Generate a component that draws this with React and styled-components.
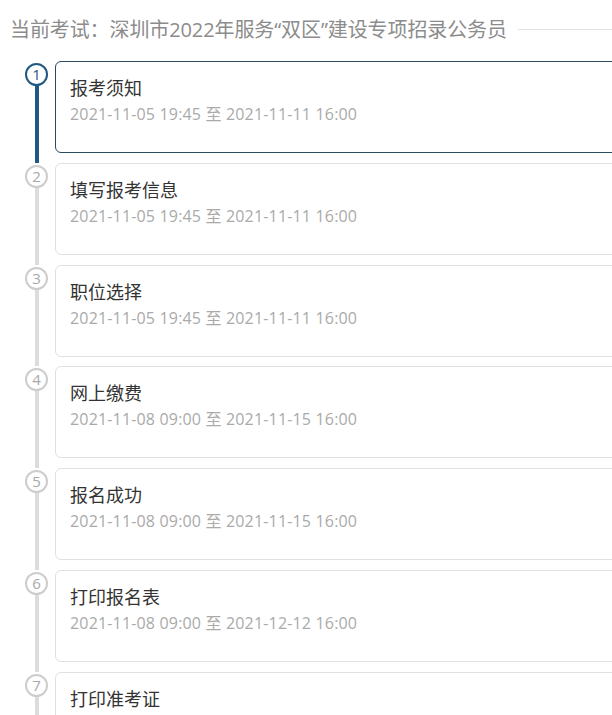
import React from 'react';
import styled, { createGlobalStyle } from 'styled-components';

const GlobalStyle = createGlobalStyle`
  body {
    margin: 0;
    background: #fff;
    overflow: hidden;
    font-family: "Open Sans", "Noto Sans CJK SC", sans-serif;
  }
`;

const steps = [
  { title: '报考须知', time: '2021-11-05 19:45 至 2021-11-11 16:00' },
  { title: '填写报考信息', time: '2021-11-05 19:45 至 2021-11-11 16:00' },
  { title: '职位选择', time: '2021-11-05 19:45 至 2021-11-11 16:00' },
  { title: '网上缴费', time: '2021-11-08 09:00 至 2021-11-15 16:00' },
  { title: '报名成功', time: '2021-11-08 09:00 至 2021-11-15 16:00' },
  { title: '打印报名表', time: '2021-11-08 09:00 至 2021-12-12 16:00' },
  { title: '打印准考证', time: '' },
];

const App = () => {
  const current = 0;
  return (
    <Page>
      <GlobalStyle />
      <Header>
        <HeaderTitle>当前考试：深圳市2022年服务“双区”建设专项招录公务员</HeaderTitle>
        <HeaderLine />
      </Header>
      <StepList>
        {steps.map((step, i) => (
          <Step key={i}>
            <Rail>
              <Circle active={i === current}>{i + 1}</Circle>
              <RailLine active={i === current} />
            </Rail>
            <Card active={i === current}>
              <CardTitle>{step.title}</CardTitle>
              <CardTime>{step.time}</CardTime>
            </Card>
          </Step>
        ))}
      </StepList>
    </Page>
  );
};

export default App;

const Page = styled.div`
  width: 720px;
`;

const Header = styled.div`
  display: flex;
  align-items: center;
  padding: 18px 0 0 10px;
  width: 602px;
`;

const HeaderTitle = styled.div`
  font-size: 20px;
  line-height: 24px;
  color: #8c8c8c;
  white-space: nowrap;
  letter-spacing: -0.1px;
`;

const HeaderLine = styled.div`
  flex: 1;
  height: 1px;
  background: #e2e2e2;
  margin-left: 11px;
  margin-top: -2px;
`;

const StepList = styled.div`
  margin-top: 19px;
`;

const Step = styled.div`
  display: flex;
`;

const Rail = styled.div`
  width: 55px;
  padding: 2px 0 0 25px;
  box-sizing: border-box;
  display: flex;
  flex-direction: column;
  align-items: flex-start;
`;

const Circle = styled.div`
  width: 23px;
  height: 23px;
  box-sizing: border-box;
  border-radius: 50%;
  border: 2px solid ${p => (p.active ? '#1f5883' : '#cdcdcd')};
  color: ${p => (p.active ? '#1f5883' : '#a8a8a8')};
  font-size: 15px;
  line-height: 19px;
  text-align: center;
  background: #fff;
`;

const RailLine = styled.div`
  flex: 1;
  width: 4px;
  margin-left: 9.5px;
  background: ${p => (p.active ? '#1f5883' : '#dcdcdc')};
`;

const Card = styled.div`
  width: 620px;
  height: 92px;
  box-sizing: border-box;
  margin-bottom: 9.8px;
  padding: 14px 14px;
  border: 1px solid ${p => (p.active ? '#2b4a5c' : '#e0e0e0')};
  border-radius: 6px;
  background: #fff;
`;

const CardTitle = styled.div`
  font-size: 18px;
  line-height: 24px;
  color: #333;
`;

const CardTime = styled.div`
  margin-top: 2px;
  font-size: 16px;
  line-height: 24px;
  color: #aaa;
  letter-spacing: 0.17px;
`;
